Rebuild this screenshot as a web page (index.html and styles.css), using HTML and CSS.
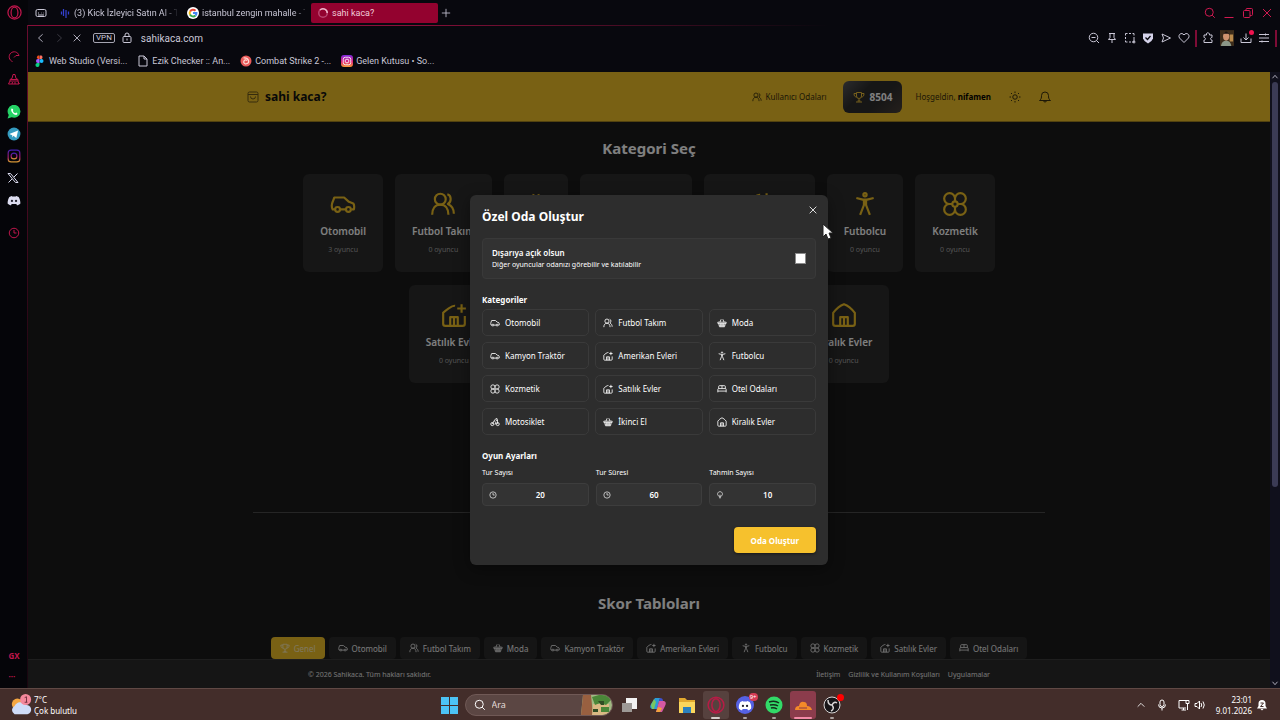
FILE: index.html
```html
<!DOCTYPE html>
<html lang="tr">
<head>
    <meta charset="UTF-8">
    <meta name="viewport" content="width=device-width, initial-scale=1.0">
    <title>sahi kaca?</title>
    <link rel="stylesheet" href="styles.css">
</head>
<body>
    <!-- Icon sprite -->
    <svg class="sprite" aria-hidden="true">
        <symbol id="i-car" viewBox="0 0 24 24"><circle cx="7" cy="17" r="2.2"/><circle cx="17" cy="17" r="2.2"/><path d="M4.800 17H2.500c-1-2-1-5 0-7l1.500-4h9l4.500 4 4 1.500c1 1.500 1 3.500.500 5.500h-2.300M9.200 17h5.600"/></symbol>
        <symbol id="i-users" viewBox="0 0 24 24"><circle cx="9.500" cy="7.500" r="5"/><path d="M2 22c0-6 3-9.500 7.500-9.500S17 16 17 22M16 3c4 1 4 7 .500 9 3.500 1.500 5.500 5 5.500 9"/></symbol>
        <symbol id="i-basket" viewBox="0 0 24 24"><path d="M2 10h20v3H2zM4 13l2 8h12l2-8M7 10l3-7M17 10l-3-7M9 13v8M12 13v8M15 13v8M5 17h14"/></symbol>
        <symbol id="i-homeplus" viewBox="0 0 24 24"><path d="M13 3.500C10 3 4 8 2 10v10q0 2 2 2h16q2 0 2-2v-7M8.500 22v-8h7v8M12 15v7M19 2v8M15 6h8"/></symbol>
        <symbol id="i-home" viewBox="0 0 24 24"><path d="M2 10c3-4 7-7 10-8 3 1 7 4 10 8v10q0 2-2 2H4q-2 0-2-2zM8.500 22v-8h7v8M12 15v7"/></symbol>
        <symbol id="i-man" viewBox="0 0 24 24"><circle cx="12" cy="3.500" r="1.500"/><path d="M4 6.500 10 8h4l6-1.500M11 8.500v4.500L7.500 22M13 8.500v4.500l3.500 9"/></symbol>
        <symbol id="i-flower" viewBox="0 0 24 24"><circle cx="12" cy="12" r="2.500"/><path d="M12 9.500V7a5 5 0 1 0-5 5h2.500M14.500 12H17a5 5 0 1 0-5-5M12 14.500V17a5 5 0 1 0 5-5M9.500 12H7a5 5 0 1 0 5 5"/></symbol>
        <symbol id="i-bed" viewBox="0 0 24 24"><path d="M4 11V6q0-2 2-2h12q2 0 2 2v5M2 20v-7q0-2 2-2h16q2 0 2 2v7M2 17h20M12 4v7"/></symbol>
        <symbol id="i-bike" viewBox="0 0 24 24"><circle cx="5.500" cy="17" r="3.700"/><circle cx="18.500" cy="17" r="3.700"/><path d="M5.500 17 10 9l4 4-2 5M10 9l4-5h3l1.500 13M14 8h5"/></symbol>
        <symbol id="i-trophy" viewBox="0 0 24 24"><path d="M7 3h10v7a5 5 0 0 1-10 0zM7 5H2c0 5 2 7 5.500 7M17 5h5c0 5-2 7-5.500 7M12 15v5M6 22h12M9 20h6"/></symbol>
        <symbol id="i-clock" viewBox="0 0 24 24"><circle cx="12" cy="12" r="9.500"/><path d="M12 6v6h5"/></symbol>
        <symbol id="i-bulb" viewBox="0 0 24 24"><path d="M9 16c-7-4-5-14 3-14s10 10 3 14zM9 19h6M11 23h2M12 16v-5"/></symbol>
        <symbol id="i-close" viewBox="0 0 24 24"><path d="M4 4l16 16M20 4 4 20"/></symbol>
        <symbol id="i-search" viewBox="0 0 24 24"><circle cx="10.500" cy="10.500" r="8"/><path d="m16.500 16.500 5 5"/></symbol>
        <symbol id="i-opera" viewBox="0 0 24 24"><circle cx="12" cy="12" r="10.500"/><ellipse cx="12" cy="12" rx="5.500" ry="8.500"/></symbol>
        <symbol id="i-insta" viewBox="0 0 24 24"><rect x="3" y="3" width="18" height="18" rx="5"/><circle cx="12" cy="12" r="4.500"/><path d="M17 6.500v.500"/></symbol>
        <symbol id="i-discord" viewBox="0 0 24 24"><path d="M8 5 4 7C2 10 1 14 1 18c2 2 4 3 6 3l1-2h8l1 2c2 0 4-1 6-3 0-4-1-8-3-11l-4-2-1 1h-6z" fill="currentColor" stroke="none"/><circle cx="8.500" cy="13.500" r="2" fill="#22222e" stroke="none"/><circle cx="15.500" cy="13.500" r="2" fill="#22222e" stroke="none"/></symbol>
    </svg>

    <div class="window">
        <!-- Opera sidebar -->
        <aside class="sidebar">
            <button class="side-btn logo" aria-label="Opera"><svg class="ico s15"><use href="#i-opera"/></svg></button>
            <div class="side-group">
                <button class="side-btn" aria-label="GX Control"><svg class="ico s12" viewBox="0 0 24 24"><path d="M9 21A10 10 0 1 1 22 9h-6M12 13l4-4"/></svg></button>
                <button class="side-btn" aria-label="GX Cleaner"><svg class="ico s12" viewBox="0 0 24 24"><path d="M8 11 10 3h4l2 8 4 2v3H4v-3zM4 16l-3 6h21l-2-6M8 22l1-4M14 22v-4M5 13h14M20 18l3 4"/></svg></button>
            </div>
            <div class="side-group">
                <button class="side-btn" aria-label="WhatsApp"><svg class="s14" viewBox="0 0 24 24"><path d="M1 23l2-6A11 11 0 1 1 8 21z" fill="#25d366"/><path d="M8 6c-3 3 2 11 8 11 3-1 2-3 0-4l-2 1c-2 0-4-3-4-4 2-1 0-4-2-4z" fill="#fff"/></svg></button>
                <button class="side-btn" aria-label="Telegram"><svg class="s14" viewBox="0 0 24 24"><circle cx="12" cy="12" r="11" fill="#349bc0"/><path d="M4 12 19 6l-3 13-5-4-2 3v-4z" fill="#fff"/></svg></button>
                <button class="side-btn" aria-label="Instagram"><svg class="ico s14 insta" viewBox="0 0 24 24"><defs><linearGradient id="ig" x1="0" y1="0" x2="0" y2="1"><stop offset="0" stop-color="#4320b0"/><stop offset=".6" stop-color="#a81b70"/><stop offset="1" stop-color="#d69a32"/></linearGradient></defs><rect x="2" y="2" width="20" height="20" rx="5"/><circle cx="12" cy="12" r="5"/></svg></button>
                <button class="side-btn" aria-label="X"><svg class="ico s12 light" viewBox="0 0 24 24"><path d="M2 3h5l15 18h-5zM21 3 14 10M10 14l-7 7"/></svg></button>
                <button class="side-btn" aria-label="Discord"><svg class="ico s14 light"><use href="#i-discord"/></svg></button>
            </div>
            <div class="side-group">
                <button class="side-btn" aria-label="Geçmiş"><svg class="ico s12"><use href="#i-clock"/></svg></button>
            </div>
            <div class="side-group bottom">
                <button class="side-btn gx">GX</button>
                <button class="side-btn dots" aria-label="Menü">•••</button>
            </div>
        </aside>

        <div class="browser">
            <div class="tabs-bar">
                <button class="tool" aria-label="Sekmeler"><svg class="ico s12" viewBox="0 0 24 24"><rect x="2" y="5" width="20" height="14" rx="3"/><path d="M6 12h2M12 12h1M17 12h1M6 16h12"/></svg></button>
                <div class="tab">
                    <svg class="s12" viewBox="0 0 24 24" fill="none" stroke="#3340d0" stroke-width="2.500"><path d="M5 9v6M9 4v14M14 6v16M19 9v6"/></svg>
                    <span>(3) Kick İzleyici Satın Al - T</span>
                </div>
                <div class="tab">
                    <svg class="s12" viewBox="0 0 24 24"><circle cx="12" cy="12" r="12" fill="#fff"/><g fill="none" stroke-width="4"><path d="M17 7.500A7 7 0 0 0 6 9" stroke="#ea4335"/><path d="M6 9a7 7 0 0 0 0 6" stroke="#fbbc05"/><path d="M6 15a7 7 0 0 0 11 2" stroke="#34a853"/><path d="M17 17a7 7 0 0 0 2-5h-7" stroke="#4285f4"/></g></svg>
                    <span>istanbul zengin mahalle - T</span>
                </div>
                <div class="tab active">
                    <svg class="s12" viewBox="0 0 24 24" fill="none" stroke-width="3"><circle cx="12" cy="12" r="8.500" stroke="#b8446e"/><path d="M6 6a8.500 8.500 0 0 1 14.500 6" stroke="#efb6cb"/></svg>
                    <span>sahi kaca?</span>
                </div>
                <button class="tool new-tab" aria-label="Yeni sekme"><svg class="ico s10" viewBox="0 0 24 24"><path d="M12 2v20M2 12h20"/></svg></button>
                <div class="win-controls">
                    <button class="tool" aria-label="Ara"><svg class="ico s12"><use href="#i-search"/></svg></button>
                    <button class="tool" aria-label="Küçült"><svg class="ico s12" viewBox="0 0 24 24"><path d="M3 21h18"/></svg></button>
                    <button class="tool" aria-label="Geri yükle"><svg class="ico s12" viewBox="0 0 24 24"><rect x="3" y="7" width="13" height="14" rx="2"/><path d="M8 7V5q0-2 2-2h9q2 0 2 2v10q0 2-2 2h-3"/></svg></button>
                    <button class="tool" aria-label="Kapat"><svg class="ico s12"><use href="#i-close"/></svg></button>
                </div>
            </div>

            <div class="address-bar">
                <button class="tool" aria-label="Geri"><svg class="ico s10" viewBox="0 0 24 24"><path d="M16 3 6 12l10 9"/></svg></button>
                <button class="tool off" aria-label="İleri"><svg class="ico s10" viewBox="0 0 24 24"><path d="m8 3 10 9L8 21"/></svg></button>
                <button class="tool" aria-label="Durdur"><svg class="ico s10"><use href="#i-close"/></svg></button>
                <span class="vpn">VPN</span>
                <svg class="ico s12" viewBox="0 0 24 24"><rect x="4" y="9" width="16" height="12" rx="2"/><path d="M8 9V6a4 4 0 0 1 8 0v3M12 13v4"/></svg>
                <input class="url" type="text" value="sahikaca.com" aria-label="Adres">
                <div class="actions">
                    <button class="tool" aria-label="Yakınlaştırma"><svg class="ico s12" viewBox="0 0 24 24"><circle cx="11" cy="11" r="8.500"/><path d="M7 11h8M17 17l5 5"/></svg></button>
                    <button class="tool" aria-label="Sabitle"><svg class="ico s12" viewBox="0 0 24 24"><path d="M6 3h12M8 3v8l-3 4h14l-3-4V3M12 15v7"/></svg></button>
                    <button class="tool" aria-label="Anlık görüntü"><svg class="ico s12" viewBox="0 0 24 24"><path d="M3 7V3h4M10 3h4M17 3h3v4M20 10v10h-4M3 10v4M3 17v3h4M10 20h4M20 17v6M17 20h6"/></svg></button>
                    <button class="tool" aria-label="Reklam engelleyici"><svg class="s12" viewBox="0 0 24 24"><path d="M2 3h20v10q-2 6-10 10Q4 19 2 13z" fill="#d5d3ea"/><path d="m7 11 4 4 6-7" fill="none" stroke="#08080e" stroke-width="2.500"/></svg></button>
                    <button class="tool" aria-label="Akışım"><svg class="ico s12" viewBox="0 0 24 24"><path d="M4 4l17 8L4 20l3-8z"/></svg></button>
                    <button class="tool" aria-label="Yer imi"><svg class="ico s12" viewBox="0 0 24 24"><path d="M12 21 3 12C-1 6 7-1 12 6c5-7 13 0 9 6z"/></svg></button>
                    <span class="bar"></span>
                    <button class="tool" aria-label="Uzantılar"><svg class="ico s12" viewBox="0 0 24 24"><path d="M4 6h5c-2-6 7-6 6 0h5v5c-4 0-4 5 0 5v5H4v-5c4 0 4-5 0-5z"/></svg></button>
                    <span class="avatar"><svg viewBox="0 0 16 18"><path fill="#3c2c1b" d="M0 0h16v18H0z"/><path fill="#b98a4c" d="M11 5h4v8h-4z"/><ellipse cx="7" cy="7" rx="3.500" ry="5" fill="#d0936f"/><path fill="#191310" d="M3 5q4-7 8 0L9 4H5z"/><path fill="#8b9787" d="M1 18q1-6 6-6t6 6z"/></svg></span>
                    <button class="tool download" aria-label="İndirmeler"><svg class="ico s12" viewBox="0 0 24 24"><path d="M2 13v8h20v-8M12 3v13M7 11l5 5 5-5"/></svg></button>
                    <button class="tool" aria-label="Ayarlar"><svg class="ico s12" viewBox="0 0 24 24"><path d="M2 5h20M2 12h20M2 19h20M15 3v4M8 17v4"/></svg></button>
                    <span class="bar"></span>
                </div>
            </div>

            <nav class="bookmarks">
                <a href="#"><svg class="s12" viewBox="0 0 24 24"><path d="M10 1H8a4 4 0 0 0 0 7h3z" fill="#f24e1e"/><path d="M11 1h4a4 4 0 0 1 0 7h-4z" fill="#ff7262"/><path d="M11 8H8a4 4 0 0 0 0 8h3z" fill="#a259ff"/><circle cx="15" cy="12" r="4" fill="#1abcfe"/><path d="M11 16H8a4 4 0 1 0 3 4z" fill="#0acf83"/></svg>Web Studio (Versi...</a>
                <a href="#"><svg class="ico s12" viewBox="0 0 24 24"><path d="M4 2h10l6 6v14H4zM14 2v6h6"/></svg>Ezik Checker :: An...</a>
                <a href="#"><svg class="s12" viewBox="0 0 24 24"><circle cx="12" cy="12" r="11" fill="#e85a5a"/><path d="M7 6q8-1 10 5t-6 7q-5-2-3-6t6-1" fill="none" stroke="#ffd9d4" stroke-width="2.500"/></svg>Combat Strike 2 -...</a>
                <a href="#"><span class="ig-box"><svg class="ico s10"><use href="#i-insta"/></svg></span>Gelen Kutusu • So...</a>
            </nav>

            <div class="viewport">
                <div class="site">
                    <header class="site-header">
                        <div class="header-inner">
                            <a class="brand" href="#"><svg class="ico s12" viewBox="0 0 24 24"><rect x="2" y="2" width="20" height="20" rx="3"/><path d="M2 7h20M7 11a5 5 0 0 0 10 0"/></svg>sahi kaca?</a>
                            <div class="header-right">
                                <a class="rooms" href="#"><svg class="ico s10"><use href="#i-users"/></svg>Kullanıcı Odaları</a>
                                <div class="score"><svg class="ico s12"><use href="#i-trophy"/></svg>8504</div>
                                <span class="hello">Hoşgeldin, <b>nifamen</b></span>
                                <button class="plain" aria-label="Tema"><svg class="ico s12" viewBox="0 0 24 24"><circle cx="12" cy="12" r="4.500"/><path d="M12 1v3M12 20v3M1 12h3M20 12h3M4 4l2 2M18 18l2 2M20 4l-2 2M6 18l-2 2"/></svg></button>
                                <button class="plain" aria-label="Bildirimler"><svg class="ico s12" viewBox="0 0 24 24"><path d="M1 19c4-3 4-6 4-10a7 7 0 0 1 14 0c0 4 0 7 4 10zM9 19a3 3 0 0 0 6 0"/></svg></button>
                            </div>
                        </div>
                    </header>

                    <main class="content">
                        <h2>Kategori Seç</h2>
                        <div class="cards">
                            <a class="card" href="#"><svg class="ico s26"><use href="#i-car"/></svg><b>Otomobil</b><small>3 oyuncu</small></a>
                            <a class="card" href="#"><svg class="ico s26"><use href="#i-users"/></svg><b>Futbol Takım</b><small>0 oyuncu</small></a>
                            <a class="card" href="#"><svg class="ico s26"><use href="#i-basket"/></svg><b>Moda</b><small>0 oyuncu</small></a>
                            <a class="card" href="#"><svg class="ico s26"><use href="#i-car"/></svg><b>Kamyon Traktör</b><small>0 oyuncu</small></a>
                            <a class="card" href="#"><svg class="ico s26"><use href="#i-homeplus"/></svg><b>Amerikan Evleri</b><small>0 oyuncu</small></a>
                            <a class="card" href="#"><svg class="ico s26"><use href="#i-man"/></svg><b>Futbolcu</b><small>0 oyuncu</small></a>
                            <a class="card" href="#"><svg class="ico s26"><use href="#i-flower"/></svg><b>Kozmetik</b><small>0 oyuncu</small></a>
                            <a class="card" href="#"><svg class="ico s26"><use href="#i-homeplus"/></svg><b>Satılık Evler</b><small>0 oyuncu</small></a>
                            <a class="card" href="#"><svg class="ico s26"><use href="#i-bed"/></svg><b>Otel Odaları</b><small>0 oyuncu</small></a>
                            <a class="card" href="#"><svg class="ico s26"><use href="#i-bike"/></svg><b>Motosiklet</b><small>0 oyuncu</small></a>
                            <a class="card" href="#"><svg class="ico s26"><use href="#i-basket"/></svg><b>İkinci El</b><small>0 oyuncu</small></a>
                            <a class="card" href="#"><svg class="ico s26"><use href="#i-home"/></svg><b>Kiralık Evler</b><small>0 oyuncu</small></a>
                        </div>
                        <hr>
                        <h2>Skor Tabloları</h2>
                        <div class="score-tabs">
                            <button class="active"><svg class="ico s10"><use href="#i-trophy"/></svg>Genel</button>
                            <button><svg class="ico s10"><use href="#i-car"/></svg>Otomobil</button>
                            <button><svg class="ico s10"><use href="#i-users"/></svg>Futbol Takım</button>
                            <button><svg class="ico s10"><use href="#i-basket"/></svg>Moda</button>
                            <button><svg class="ico s10"><use href="#i-car"/></svg>Kamyon Traktör</button>
                            <button><svg class="ico s10"><use href="#i-homeplus"/></svg>Amerikan Evleri</button>
                            <button><svg class="ico s10"><use href="#i-man"/></svg>Futbolcu</button>
                            <button><svg class="ico s10"><use href="#i-flower"/></svg>Kozmetik</button>
                            <button><svg class="ico s10"><use href="#i-homeplus"/></svg>Satılık Evler</button>
                            <button><svg class="ico s10"><use href="#i-bed"/></svg>Otel Odaları</button>
                        </div>
                    </main>

                    <footer class="site-footer">
                        <div class="footer-inner">
                            <span>© 2026 Sahikaca. Tüm hakları saklıdır.</span>
                            <nav>
                                <a href="#">İletişim</a>
                                <a href="#">Gizlilik ve Kullanım Koşulları</a>
                                <a href="#">Uygulamalar</a>
                            </nav>
                        </div>
                    </footer>

                    <!-- Create room dialog -->
                    <div class="overlay">
                        <form class="modal" role="dialog" aria-labelledby="modalTitle">
                            <button class="close" type="button" aria-label="Kapat"><svg class="ico s12"><use href="#i-close"/></svg></button>
                            <h3 id="modalTitle">Özel Oda Oluştur</h3>
                            <div class="public-box">
                                <label for="isPublic"><b>Dışarıya açık olsun</b><span>Diğer oyuncular odanızı görebilir ve katılabilir</span></label>
                                <input id="isPublic" type="checkbox">
                            </div>
                            <h4>Kategoriler</h4>
                            <div class="category-grid">
                                <button type="button"><svg class="ico s12"><use href="#i-car"/></svg>Otomobil</button>
                                <button type="button"><svg class="ico s12"><use href="#i-users"/></svg>Futbol Takım</button>
                                <button type="button"><svg class="ico s12"><use href="#i-basket"/></svg>Moda</button>
                                <button type="button"><svg class="ico s12"><use href="#i-car"/></svg>Kamyon Traktör</button>
                                <button type="button"><svg class="ico s12"><use href="#i-homeplus"/></svg>Amerikan Evleri</button>
                                <button type="button"><svg class="ico s12"><use href="#i-man"/></svg>Futbolcu</button>
                                <button type="button"><svg class="ico s12"><use href="#i-flower"/></svg>Kozmetik</button>
                                <button type="button"><svg class="ico s12"><use href="#i-homeplus"/></svg>Satılık Evler</button>
                                <button type="button"><svg class="ico s12"><use href="#i-bed"/></svg>Otel Odaları</button>
                                <button type="button"><svg class="ico s12"><use href="#i-bike"/></svg>Motosiklet</button>
                                <button type="button"><svg class="ico s12"><use href="#i-basket"/></svg>İkinci El</button>
                                <button type="button"><svg class="ico s12"><use href="#i-home"/></svg>Kiralık Evler</button>
                            </div>
                            <h4>Oyun Ayarları</h4>
                            <div class="settings">
                                <div class="field">
                                    <label for="rounds">Tur Sayısı</label>
                                    <div class="field-box"><svg class="ico s10"><use href="#i-clock"/></svg><input id="rounds" type="text" value="20"></div>
                                </div>
                                <div class="field">
                                    <label for="duration">Tur Süresi</label>
                                    <div class="field-box"><svg class="ico s10"><use href="#i-clock"/></svg><input id="duration" type="text" value="60"></div>
                                </div>
                                <div class="field">
                                    <label for="guesses">Tahmin Sayısı</label>
                                    <div class="field-box"><svg class="ico s10"><use href="#i-bulb"/></svg><input id="guesses" type="text" value="10"></div>
                                </div>
                            </div>
                            <button class="submit" type="submit">Oda Oluştur</button>
                        </form>
                    </div>
                </div>

                <div class="scrollbar">
                    <svg class="ico s10" viewBox="0 0 24 24"><path d="m6 15 6-7 6 7"/></svg>
                    <div class="track"><div class="thumb"></div></div>
                    <svg class="ico s10" viewBox="0 0 24 24"><path d="m6 9 6 7 6-7"/></svg>
                </div>
            </div>
        </div>
    </div>

    <!-- Windows taskbar -->
    <footer class="taskbar">
        <div class="weather">
            <svg viewBox="0 0 24 26"><circle cx="8" cy="12" r="6" fill="#f5a742"/><path d="M5 23a5 5 0 0 1 0-9 7 7 0 0 1 12-1 5 5 0 0 1 2 10z" fill="#cfdcf8"/><circle cx="17" cy="7" r="6" fill="#f4889c"/><path d="M16 5l2-1v6M16 10h3" stroke="#702c3b" fill="none"/></svg>
            <div>7°C<br>Çok bulutlu</div>
        </div>
        <div class="apps">
            <button class="app" aria-label="Başlat"><svg class="s18" viewBox="0 0 18 18" fill="#4cc3f5"><path d="M1 1h8v8H1zM10 1h8v8h-8zM1 10h8v8H1zM10 10h8v8h-8z"/></svg></button>
            <div class="search">
                <svg class="ico s12"><use href="#i-search"/></svg>
                <input type="text" placeholder="Ara" aria-label="Ara">
                <svg class="scene" viewBox="0 0 32 20"><path fill="#a1b983" d="M3 0h29v20H1z"/><path fill="#996040" d="M3 0h8l2 20H1z"/><path fill="#dab984" d="M13 9h16v11H12z"/><path fill="#4a8738" d="M12 2l7-2h9l3 5-5 5-6-2-5 2zM21 12h8v5h-8z"/><path fill="#304d24" d="M18 6h6v4h-3zM13 14h5v3h-5z"/></svg>
            </div>
            <button class="app" aria-label="Görev görünümü"><svg class="s18" viewBox="0 0 18 18"><path d="M6 2h11v11H6z" fill="#f2f2f2"/><path d="M2 7h10v9H2z" fill="#9d9996"/></svg></button>
            <button class="app" aria-label="Copilot"><svg class="s18" viewBox="0 0 18 18"><path d="M6 2h5L8 13H3Q0 12 2 8z" fill="#2b9bd8"/><path d="M2 9 5 3l2 3-2 7H3z" fill="#78c862"/><path d="M10 5h5q3 1 1 5l-3 6H7z" fill="#d659a2"/><path d="M11 2q3 0 3 3h-4z" fill="#3f51cf"/><path d="M7 16l2-5 4 1-2 4z" fill="#f3a23c"/></svg></button>
            <button class="app" aria-label="Dosya Gezgini"><svg class="s18" viewBox="0 0 18 18"><path d="M1 2h6l2 2h8v13H1z" fill="#e2a92f"/><path d="M1 6h16v11H1z" fill="#fad65c"/><path d="M5 11h8v6H5z" fill="#2b80bd"/></svg></button>
            <button class="app open opera" aria-label="Opera GX"><svg class="ico s18"><use href="#i-opera"/></svg></button>
            <button class="app running discord" aria-label="Discord"><svg class="ico s14"><use href="#i-discord"/></svg><span class="count">9+</span></button>
            <button class="app running" aria-label="Spotify"><svg class="s18" viewBox="0 0 18 18"><circle cx="9" cy="9" r="8.500" fill="#32da68"/><path d="M4 6q6-2 10 1M5 9q5-1 8 1M6 12q3-1 6 1" stroke="#142d1c" stroke-width="1.500" fill="none"/></svg></button>
            <button class="app open alert" aria-label="Cloudflare WARP"><svg class="s18" viewBox="0 0 18 18"><path d="M1 14q0-4 4-4 1-5 5-4 3 0 3 4 4 0 5 4z" fill="#f48a29"/><path d="M5 12h8" stroke="#8b3847"/></svg></button>
            <button class="app running" aria-label="OBS"><svg class="s18" viewBox="0 0 18 18"><circle cx="9" cy="9" r="8" fill="#171518" stroke="#d8d5d5"/><path d="M5 4q0 5 4 5M14 7q-3-2-5 2M8 15q4-2 1-6" fill="none" stroke="#d8d5d5" stroke-width="1.500"/></svg><span class="rec"></span></button>
        </div>
        <div class="tray">
            <svg class="ico s10" viewBox="0 0 24 24"><path d="m4 16 8-8 8 8"/></svg>
            <svg class="ico s12" viewBox="0 0 24 24"><rect x="8" y="2" width="8" height="13" rx="4"/><path d="M5 11a7 7 0 0 0 14 0M12 18v5"/></svg>
            <span class="net">
                <svg class="ico s12" viewBox="0 0 24 24"><path d="M16 3H2v15h14M7 22h9M11 18v4M19 22V9M16 3h6v6h-6z"/></svg>
                <svg class="ico s12" viewBox="0 0 24 24"><path d="M2 9h4l5-5v16l-5-5H2zM14 8q3 4 0 8M18 5q5 7 0 14"/></svg>
            </span>
            <time>23:01<br>9.01.2026</time>
            <svg class="s12" viewBox="0 0 24 24"><path d="M2 19 5 14V9a7 7 0 0 1 14 0v5l3 5zM9 20h6l-3 3z" fill="#fff"/><path d="M9 8h6l-6 7h6" stroke="#432d2a" stroke-width="2" fill="none"/></svg>
        </div>
    </footer>

    <svg class="cursor" viewBox="0 0 12 18"><path d="M1 1v13l3-3 2 5 3-1-2-5h4z" fill="#fff" stroke="#222"/></svg>
</body>
</html>
```
FILE: styles.css
```css
* {
    box-sizing: border-box;
}

body {
    margin: 0;
    height: 100vh;
    display: flex;
    flex-direction: column;
    position: relative;
    overflow: hidden;
    background: #08080e;
    color: #fff;
    font-family: "Noto Sans", "Open Sans", sans-serif;
    font-size: 9px;
}

button,
input {
    font: inherit;
    color: inherit;
    margin: 0;
    padding: 0;
    border: 0;
    background: none;
}

a {
    color: inherit;
    text-decoration: none;
}

svg {
    display: block;
    flex: none;
}

.sprite {
    position: absolute;
    width: 0;
    height: 0;
}

.ico {
    fill: none;
    stroke: currentColor;
    stroke-width: 2;
    stroke-linejoin: round;
}

.s10 { width: 10px; height: 10px; }
.s12 { width: 12px; height: 12px; }
.s14 { width: 14px; height: 14px; }
.s15 { width: 15px; height: 15px; }
.s18 { width: 18px; height: 18px; }
.s26 { width: 26px; height: 26px; }

/* Browser frame */
.window {
    flex: 1;
    min-height: 0;
    display: flex;
}

.sidebar {
    width: 28px;
    display: flex;
    flex-direction: column;
    align-items: center;
    background: linear-gradient(transparent 25px, #6a0c2e 25px, #1a0610 60%) right / 1px 100% no-repeat #050509;
    color: #c0164c;
}

.side-btn {
    height: 22px;
    display: flex;
    align-items: center;
}

.side-btn.logo {
    height: 24px;
    margin-bottom: 22px;
}

.side-group {
    margin-bottom: 11px;
}

.side-group + .side-group .side-btn {
    justify-content: center;
}

.side-group.bottom {
    margin-top: auto;
    margin-bottom: 0;
}

.side-btn.gx {
    font-size: 8px;
    font-weight: bold;
}

.side-btn.dots {
    font-size: 6px;
}

.light {
    color: #dcdcf0;
}

.ico.insta {
    stroke: url(#ig);
}

.browser {
    flex: 1;
    min-width: 0;
    display: flex;
    flex-direction: column;
    font-family: Roboto, "Noto Sans", sans-serif;
    color: #c9c7d6;
}

.tool {
    display: flex;
    align-items: center;
    justify-content: center;
    width: 12px;
    height: 18px;
    position: relative;
}

.tabs-bar {
    height: 26px;
    display: flex;
    align-items: center;
    padding: 0 7px 1px;
    background: linear-gradient(90deg, #8a0f3a 30%, transparent 64%) bottom / 100% 1px no-repeat;
}

.tab {
    width: 124px;
    height: 20px;
    margin-left: 4px;
    padding: 0 6px;
    display: flex;
    align-items: center;
    gap: 3px;
    white-space: nowrap;
    overflow: hidden;
}

.tabs-bar .tool + .tab {
    margin-left: 6px;
}

.tab span {
    -webkit-mask-image: linear-gradient(90deg, #000 85%, transparent);
    mask-image: linear-gradient(90deg, #000 85%, transparent);
}

.tab.active {
    width: 127px;
    margin-left: 6px;
    background: #93022f;
    border-radius: 2px;
    color: #f0ccd9;
}

.tab.active span {
    -webkit-mask-image: none;
    mask-image: none;
}

.new-tab {
    margin-left: 2px;
}

.win-controls {
    margin-left: auto;
    display: flex;
    gap: 7px;
    color: #d01950;
}

.address-bar {
    height: 24px;
    display: flex;
    align-items: center;
    gap: 6px;
    padding: 0 4px 0 7px;
}

.off {
    opacity: 0.3;
}

.vpn {
    margin: 0 0 0 4px;
    padding: 0 2px;
    border: 1px solid #a5a4b1;
    border-radius: 2px;
    font-size: 8px;
    line-height: 8px;
}

.url {
    flex: 1;
    min-width: 0;
    margin-left: 2px;
    font-size: 10px;
}

.actions {
    display: flex;
    align-items: center;
    gap: 6px;
}

.actions .tool {
    flex: none;
}

.actions .bar {
    width: 2px;
    height: 17px;
    margin: 0 -1px;
    background: #7e0c36;
}

.avatar svg {
    width: 14px;
    height: 16px;
}

.download::after {
    content: '';
    position: absolute;
    right: -2px;
    top: 1px;
    width: 5px;
    height: 5px;
    border-radius: 50%;
    background: #f0134f;
}

.bookmarks {
    height: 22px;
    display: flex;
    align-items: center;
    gap: 10px;
    padding: 0 0 1px 6px;
}

.bookmarks a {
    display: flex;
    align-items: center;
    gap: 3px;
}

.ig-box {
    padding: 1px;
    border-radius: 3px;
    background: linear-gradient(#7d2be0, #e02278 55%, #fb9e32);
    color: #fff;
}

/* Site */
.viewport {
    flex: 1;
    min-height: 0;
    display: flex;
}

.site {
    flex: 1;
    min-width: 0;
    display: flex;
    flex-direction: column;
    position: relative;
    overflow: hidden;
    background: #1a1a1a;
    color: #fff;
    font-family: "Noto Sans", "Open Sans", sans-serif;
}

.site-header {
    flex: none;
    background: #f2c228;
    border-bottom: 1px solid #a5851f;
    color: #3a300e;
}

.header-inner {
    max-width: 804px;
    height: 49px;
    margin: 0 auto;
    display: flex;
    align-items: center;
    justify-content: space-between;
}

.brand {
    display: flex;
    align-items: center;
    gap: 6px;
    font-size: 12px;
    font-weight: bold;
    color: #111;
}

.brand .ico {
    color: #6b571a;
}

.header-right {
    display: flex;
    align-items: center;
}

.rooms {
    display: flex;
    align-items: center;
    gap: 4px;
    font-size: 8px;
}

.score {
    height: 32px;
    margin: 0 13px 0 16px;
    padding: 0 10px;
    display: flex;
    align-items: center;
    gap: 5px;
    border-radius: 6px;
    background: linear-gradient(135deg, #58585a, #2c2c2c 35%, #2c2c2c 60%, #4a4039);
    color: #fff;
    font-size: 10px;
    font-weight: bold;
}

.score .ico {
    color: #e9bd38;
}

.hello {
    font-size: 8px;
}

.hello b {
    color: #000;
}

.plain {
    margin-left: 18px;
}

.content {
    flex: 1;
    min-height: 0;
    width: 100%;
    max-width: 792px;
    margin: 0 auto;
    padding-top: 14px;
    overflow: hidden;
}

h2 {
    margin: 0;
    font-size: 15px;
    line-height: 24px;
    text-align: center;
}

.cards {
    max-width: 720px;
    margin: 14px auto 0;
    display: flex;
    flex-wrap: wrap;
    justify-content: center;
    gap: 13px 12px;
}

.card {
    padding: 17px 17px 16px;
    display: flex;
    flex-direction: column;
    align-items: center;
    border-radius: 6px;
    background: #2c2c2c;
}

.card .ico {
    color: #f2c228;
}

.card b {
    margin: 6px 0 5px;
    font-size: 10px;
    font-weight: 600;
    line-height: 16px;
}

.card small {
    color: #a8a8a8;
    font-size: 7px;
    line-height: 12px;
}

hr {
    margin: 129px 0 78px;
    border: 0;
    border-top: 1px solid #4a4a4a;
}

.score-tabs {
    margin-top: 22px;
    display: flex;
    flex-wrap: wrap;
    justify-content: center;
    gap: 4px;
}

.score-tabs button {
    height: 22px;
    padding: 0 9px;
    display: flex;
    align-items: center;
    gap: 4px;
    border-radius: 4px;
    background: #2a2a2a;
    color: #f0f0f0;
    font-size: 8px;
}

.score-tabs .active {
    background: #f2c228;
    color: #fff0c0;
}

.site-footer {
    flex: none;
    background: #2a2a2a;
    border-top: 1px solid #3d3d3d;
    color: #e8e8e8;
    font-size: 7px;
}

.footer-inner {
    max-width: 682px;
    height: 28px;
    margin: 0 auto;
    display: flex;
    align-items: center;
    justify-content: space-between;
}

.footer-inner nav {
    display: flex;
    gap: 8px;
}

/* Dialog */
.overlay {
    position: absolute;
    inset: 0;
    display: flex;
    align-items: center;
    justify-content: center;
    background: rgba(0, 0, 0, 0.5);
}

.modal {
    position: relative;
    width: 358px;
    padding: 12px;
    display: flex;
    flex-direction: column;
    border-radius: 6px;
    background: #2d2d2d;
    box-shadow: 0 4px 16px rgba(0, 0, 0, 0.4);
}

.close {
    position: absolute;
    top: 9px;
    right: 9px;
}

.close .ico {
    padding: 1px;
}

h3 {
    margin: 0 0 11px;
    font-size: 12px;
    line-height: 20px;
}

.public-box {
    height: 41px;
    padding: 0 9px;
    display: flex;
    align-items: center;
    justify-content: space-between;
    border: 1px solid #393939;
    border-radius: 4px;
    background: #323232;
}

.public-box label {
    display: flex;
    flex-direction: column;
    font-size: 8px;
    line-height: 12px;
}

.public-box b {
    font-weight: 600;
}

.public-box span {
    font-size: 7px;
}

.public-box input {
    appearance: none;
    width: 11px;
    height: 11px;
    border: 1px solid #8a8a8a;
    background: #fff;
}

h4 {
    margin: 14px 0 3px;
    font-size: 8px;
    line-height: 13px;
}

.category-grid {
    display: grid;
    grid-template-columns: repeat(3, 1fr);
    gap: 6px;
}

.category-grid button {
    height: 27px;
    padding: 0 6px;
    display: flex;
    align-items: center;
    gap: 4px;
    border: 1px solid #3a3a3a;
    border-radius: 5px;
    font-size: 8px;
}

.category-grid .ico {
    padding: 1px;
}

.settings {
    display: grid;
    grid-template-columns: repeat(3, 1fr);
    gap: 7px;
}

.field {
    min-width: 0;
}

.field label {
    display: block;
    margin-bottom: 2px;
    font-size: 7px;
    line-height: 16px;
}

.field-box {
    height: 23px;
    padding: 0 5px;
    display: flex;
    align-items: center;
    border: 1px solid #3d3d3d;
    border-radius: 4px;
    background: #333;
}

.field-box .ico {
    padding: 1px;
}

.field-box input {
    flex: 1;
    min-width: 0;
    text-align: center;
    font-size: 8px;
    font-weight: 600;
}

.submit {
    align-self: flex-end;
    height: 26px;
    margin-top: 21px;
    padding: 0 17px;
    border-radius: 4px;
    background: #f6c12d;
    font-size: 8px;
    font-weight: bold;
    box-shadow: 0 1px 3px rgba(0, 0, 0, 0.5);
}

.scrollbar {
    width: 10px;
    display: flex;
    flex-direction: column;
    background: #10101c;
}

.track {
    flex: 1;
    padding: 0 2px;
}

.thumb {
    height: 68%;
    border-radius: 3px;
    background: #3b3b55;
}

/* Taskbar */
.taskbar {
    flex: none;
    height: 32px;
    display: grid;
    grid-template-columns: 1fr auto 1fr;
    align-items: center;
    border-top: 1px solid #604945;
    background: #432d2a;
    font-size: 8px;
    line-height: 11px;
}

.weather {
    display: flex;
    align-items: center;
    gap: 2px;
    padding-left: 10px;
}

.weather svg {
    width: 22px;
    height: 24px;
}

.apps {
    display: flex;
    align-items: center;
    gap: 3px;
}

.app {
    position: relative;
    width: 26px;
    height: 28px;
    display: flex;
    align-items: center;
    justify-content: center;
    border-radius: 3px;
}

.app.open {
    background: #56413e;
}

.app.opera {
    color: #b71c46;
}

.app.alert {
    background: #8b3c4c;
}

.app.running::after,
.app.open::after {
    content: '';
    position: absolute;
    bottom: 0;
    width: 4px;
    height: 2px;
    border-radius: 1px;
    background: #aaa09e;
}

.app.open::after {
    width: 9px;
    background: #d6cecc;
}

.app.alert::after {
    width: 18px;
    background: #f58aa8;
}

.discord .ico {
    padding: 2px;
    width: 18px;
    height: 18px;
    border-radius: 50%;
    background: #5561e4;
}

.count {
    position: absolute;
    top: 2px;
    right: 0;
    padding: 0 1px;
    border-radius: 5px;
    background: #d43c55;
    font-size: 6px;
    line-height: 8px;
}

.rec {
    position: absolute;
    top: 3px;
    right: 1px;
    width: 7px;
    height: 7px;
    border-radius: 50%;
    background: #f00;
}

.search {
    width: 148px;
    height: 22px;
    padding-left: 8px;
    display: flex;
    align-items: center;
    gap: 6px;
    overflow: hidden;
    border: 1px solid #705956;
    border-radius: 11px;
    background: #5b4643;
}

.search input {
    flex: 1;
    min-width: 0;
    font-size: 9px;
}

.search input::placeholder {
    color: #e2dad8;
    opacity: 1;
}

.scene {
    width: 32px;
    height: 20px;
}

.tray {
    justify-self: end;
    display: flex;
    align-items: center;
    gap: 10px;
    padding-right: 12px;
}

.net {
    display: flex;
    gap: 4px;
}

.tray time {
    text-align: right;
}

.tray time + svg {
    margin-left: -6px;
}

.cursor {
    position: absolute;
    left: 822px;
    top: 223px;
    width: 12px;
    height: 18px;
}
```
